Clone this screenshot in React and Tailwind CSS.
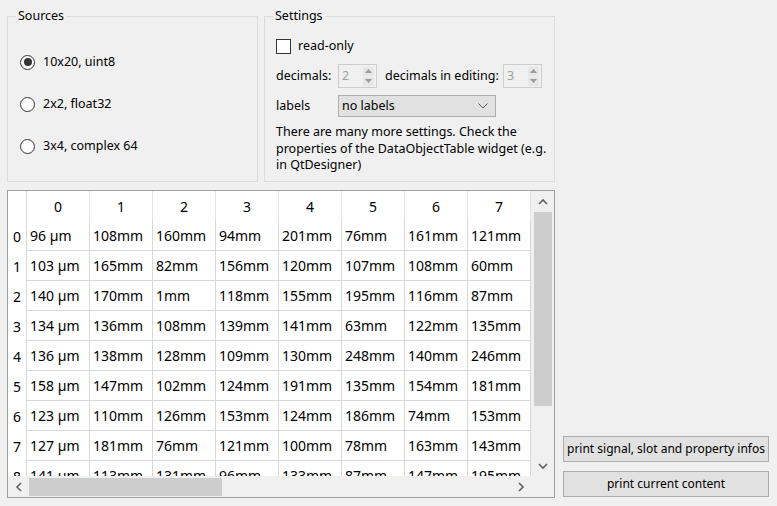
import React from 'react';

const rows = [
  ['96 µm', '108mm', '160mm', '94mm', '201mm', '76mm', '161mm', '121mm'],
  ['103 µm', '165mm', '82mm', '156mm', '120mm', '107mm', '108mm', '60mm'],
  ['140 µm', '170mm', '1mm', '118mm', '155mm', '195mm', '116mm', '87mm'],
  ['134 µm', '136mm', '108mm', '139mm', '141mm', '63mm', '122mm', '135mm'],
  ['136 µm', '138mm', '128mm', '109mm', '130mm', '248mm', '140mm', '246mm'],
  ['158 µm', '147mm', '102mm', '124mm', '191mm', '135mm', '154mm', '181mm'],
  ['123 µm', '110mm', '126mm', '153mm', '124mm', '186mm', '74mm', '153mm'],
  ['127 µm', '181mm', '76mm', '121mm', '100mm', '78mm', '163mm', '143mm'],
  ['141 µm', '113mm', '131mm', '96mm', '133mm', '87mm', '147mm', '195mm'],
];

function Chevron({ dir, className }) {
  const d = {
    up: 'M1 6 L5 2 L9 6',
    down: 'M1 2 L5 6 L9 2',
    left: 'M6 1 L2 5 L6 9',
    right: 'M2 1 L6 5 L2 9',
  }[dir];
  const vb = dir === 'up' || dir === 'down' ? '0 0 10 8' : '0 0 8 10';
  const size = dir === 'up' || dir === 'down' ? 'w-[10px] h-[8px]' : 'w-[8px] h-[10px]';
  return (
    <svg viewBox={vb} className={`${size} ${className || ''}`} fill="none" stroke="#606060" strokeWidth="1.6">
      <path d={d} />
    </svg>
  );
}

function Radio({ checked, label }) {
  return (
    <div className="flex items-center h-[16px]">
      <span className="ml-[12px] w-[15px] h-[15px] rounded-full border border-[#333] bg-white flex items-center justify-center">
        {checked && <span className="w-[8px] h-[8px] rounded-full bg-[#333]" />}
      </span>
      <span className="ml-[8px]">{label}</span>
    </div>
  );
}

function SpinBox({ value }) {
  return (
    <div className="w-[39px] h-[24px] border border-[#cccccc] bg-[#f0f0f0] flex items-center">
      <span className="ml-[3px] flex-1 text-[#a0a0a0]">{value}</span>
      <div className="flex flex-col mr-[2px] gap-[1px]">
        <div className="w-[11px] h-[9px] bg-[#e6e6e6] flex items-center justify-center">
          <svg viewBox="0 0 7 4" className="w-[7px] h-[4px]"><path d="M0 4 L3.5 0 L7 4 Z" fill="#9a9a9a" /></svg>
        </div>
        <div className="w-[11px] h-[9px] bg-[#e6e6e6] flex items-center justify-center">
          <svg viewBox="0 0 7 4" className="w-[7px] h-[4px]"><path d="M0 0 L3.5 4 L7 0 Z" fill="#9a9a9a" /></svg>
        </div>
      </div>
    </div>
  );
}

export default function App() {
  return (
    <div className="w-[777px] h-[506px] bg-[#f0f0f0] text-black text-[12.5px] flex pl-[7px] pt-[8px] overflow-hidden" style={{ fontFamily: '"Noto Sans", sans-serif' }}>
      {/* left column */}
      <div className="w-[548px] flex flex-col">
        <div className="flex gap-[6px]">
          {/* Sources */}
          <fieldset className="w-[251px] h-[174px] border border-[#dcdcdc]">
            <legend className="ml-[8px] px-[2px] leading-[16px]">Sources</legend>
            <div className="flex flex-col gap-[26px] pt-[30px]">
              <Radio checked label="10x20, uint8" />
              <Radio label="2x2, float32" />
              <Radio label="3x4, complex 64" />
            </div>
          </fieldset>

          {/* Settings */}
          <fieldset className="w-[291px] h-[174px] border border-[#dcdcdc]">
            <legend className="ml-[8px] px-[2px] leading-[16px]">Settings</legend>
            <div className="pl-[11px] pt-[15px] flex flex-col">
              <div className="flex items-center h-[15px]">
                <span className="w-[15px] h-[15px] border border-[#333] bg-white" />
                <span className="ml-[7px]">read-only</span>
              </div>
              <div className="flex items-center mt-[10px]">
                <span className="w-[62px]">decimals:</span>
                <SpinBox value="2" />
                <span className="ml-[8px] w-[118px] whitespace-nowrap">decimals in editing:</span>
                <SpinBox value="3" />
              </div>
              <div className="flex items-center mt-[7px]">
                <span className="w-[62px]">labels</span>
                <div className="w-[158px] h-[22px] border border-[#adadad] bg-[#e1e1e1] flex items-center justify-between px-[3px]">
                  <span>no labels</span>
                  <svg viewBox="0 0 10 6" className="w-[10px] h-[6px] mr-[4px]" fill="none" stroke="#555" strokeWidth="1">
                    <path d="M0.5 0.5 L5 5 L9.5 0.5" />
                  </svg>
                </div>
              </div>
              <p className="mt-[7px] leading-[16.5px] pr-[4px]">
                There are many more settings. Check the properties of the DataObjectTable widget (e.g. in QtDesigner)
              </p>
            </div>
          </fieldset>
        </div>

        {/* table */}
        <div className="mt-[8px] h-[308px] border border-[#a0a0a0] bg-white flex flex-col text-[14px]">
          <div className="flex h-[285px]">
            <div className="w-[523px] h-[285px] overflow-hidden flex flex-col">
              <div className="flex h-[30px] shrink-0">
                <div className="w-[19px] border-r border-[#d8d8d8]" />
                {[0, 1, 2, 3, 4, 5, 6, 7].map((c) => (
                  <div key={c} className="w-[63px] border-r border-[#e5e5e5] flex items-center justify-center">{c}</div>
                ))}
              </div>
              {rows.map((r, i) => (
                <div key={i} className="flex h-[30px] shrink-0">
                  <div className="w-[19px] border-r border-[#d8d8d8] flex items-center justify-center">{i}</div>
                  {r.map((v, j) => (
                    <div key={j} className="w-[63px] border-r border-b border-[#d8d8d8] flex items-center pl-[3px] whitespace-nowrap">{v}</div>
                  ))}
                </div>
              ))}
            </div>
            {/* vertical scrollbar */}
            <div className="w-[23px] bg-[#f0f0f0] flex flex-col items-center border-l border-[#f0f0f0]">
              <div className="h-[21px] flex items-center justify-center"><Chevron dir="up" /></div>
              <div className="w-[18px] h-[194px] bg-[#cdcdcd]" />
              <div className="flex-1" />
              <div className="h-[21px] flex items-center justify-center"><Chevron dir="down" /></div>
            </div>
          </div>
          {/* horizontal scrollbar */}
          <div className="flex h-[21px] bg-[#f0f0f0]">
            <div className="w-[523px] flex items-center">
              <div className="w-[21px] flex items-center justify-center"><Chevron dir="left" /></div>
              <div className="w-[193px] h-[18px] bg-[#cdcdcd]" />
              <div className="flex-1" />
              <div className="w-[21px] flex items-center justify-center"><Chevron dir="right" /></div>
            </div>
            <div className="flex-1" />
          </div>
        </div>
      </div>

      {/* right column */}
      <div className="ml-[8px] w-[206px] flex flex-col justify-end gap-[9px] pb-[9px]">
        <button className="h-[26px] border border-[#adadad] bg-[#e1e1e1] text-[12px] whitespace-nowrap">print signal, slot and property infos</button>
        <button className="h-[26px] border border-[#adadad] bg-[#e1e1e1] text-[12px]">print current content</button>
      </div>
    </div>
  );
}
